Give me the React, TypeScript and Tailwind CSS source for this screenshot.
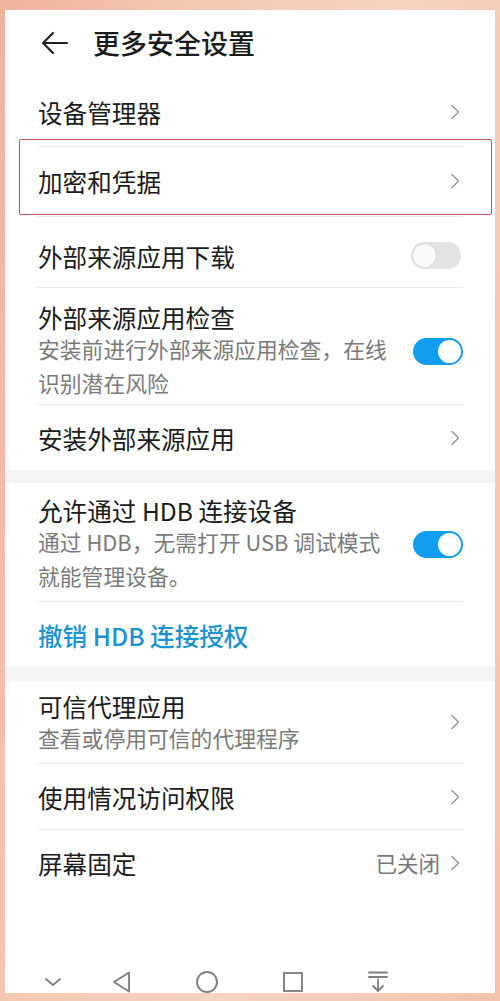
import type { ReactNode } from "react";

const font = { fontFamily: '"Noto Sans CJK SC", "Noto Sans", sans-serif' };

function Chevron() {
  return (
    <svg width="12" height="18" viewBox="0 0 12 18" className="shrink-0">
      <path d="M3 2.5 L9.5 9 L3 15.5" fill="none" stroke="#9b9b9b" strokeWidth="1.6" strokeLinecap="round" strokeLinejoin="round" />
    </svg>
  );
}

function Toggle({ on }: { on: boolean }) {
  return on ? (
    <div className="flex h-[27px] w-[50px] shrink-0 items-center justify-end rounded-full bg-[#139df0] p-[2px]">
      <div className="h-[23px] w-[23px] rounded-full bg-white" />
    </div>
  ) : (
    <div className="flex h-[27px] w-[50px] shrink-0 items-center rounded-full bg-[#e3e3e3] p-[2px]">
      <div className="h-[23px] w-[23px] rounded-full bg-[#fafafa] shadow-[0_0_1px_rgba(0,0,0,0.25)]" />
    </div>
  );
}

function Divider() {
  return <div className="mx-[32px] h-px bg-[#ebebeb]" />;
}

type RowProps = {
  title: string;
  right?: ReactNode;
  className?: string;
};

function Row({ title, right, className = "" }: RowProps) {
  return (
    <div className={`flex items-center justify-between pl-[33px] pr-[34px] ${className}`}>
      <span className="text-[24.6px] leading-[32px] text-[#1b1b1b]">{title}</span>
      {right ?? <Chevron />}
    </div>
  );
}

export default function App() {
  return (
    <div
      className="flex h-[1001px] w-[500px] flex-col bg-[linear-gradient(100deg,#efb39c_0%,#f4c9b3_30%,#f6d3c0_60%,#f2c3ac_100%)] pb-[8px] pl-[5px] pr-[5px] pt-[10px]"
      style={font}
    >
      <div className="flex flex-1 flex-col bg-white">
        <header className="flex h-[66px] items-center pl-[35px]">
          <svg width="30" height="26" viewBox="0 0 30 26" className="shrink-0">
            <path d="M27 13 H4 M13 3 L3 13 L13 23" fill="none" stroke="#222" strokeWidth="2.2" strokeLinecap="round" strokeLinejoin="round" />
          </svg>
          <h1 className="ml-[23px] text-[27px] font-medium leading-[34px] text-[#1b1b1b]">更多安全设置</h1>
        </header>

        <Row title="设备管理器" className="h-[70px] pt-[2px]" />
        <Divider />
        <div className="relative">
          <Row title="加密和凭据" className="h-[69px] pb-[2px]" />
          <div className="pointer-events-none absolute -top-[8px] bottom-px left-[14px] right-[3px] rounded-[2px] border-[length:1.5px] border-solid border-[color:#c4505b]" />
        </div>
        <Divider />
        <Row title="外部来源应用下载" right={<Toggle on={false} />} className="h-[70px] pt-[7px]" />
        <Divider />

        <div className="flex items-center justify-between pb-[4px] pl-[33px] pr-[32px] pt-[14px]">
          <div>
            <div className="text-[24.6px] leading-[30px] text-[#1b1b1b]">外部来源应用检查</div>
            <div className="text-[21.8px] leading-[34px] text-[#7a7a7a]">
              安装前进行外部来源应用检查，在线
              <br />
              识别潜在风险
            </div>
          </div>
          <Toggle on />
        </div>
        <Divider />
        <Row title="安装外部来源应用" className="h-[65px]" />

        <div className="h-[13px] bg-[#f4f4f4]" />

        <div className="flex items-center justify-between pb-[8px] pl-[33px] pr-[32px] pt-[12px]">
          <div>
            <div className="text-[24.6px] leading-[30px] text-[#1b1b1b]">允许通过 HDB 连接设备</div>
            <div className="text-[21.8px] leading-[34px] text-[#7a7a7a]">
              通过 HDB，无需打开 USB 调试模式
              <br />
              就能管理设备。
            </div>
          </div>
          <Toggle on />
        </div>
        <Divider />
        <div className="flex h-[65px] items-center pl-[33px]">
          <span className="text-[24.6px] font-medium leading-[32px] text-[#1d92d2]">撤销 HDB 连接授权</span>
        </div>

        <div className="h-[14px] bg-[#f4f4f4]" />

        <div className="flex items-center justify-between pb-[9px] pl-[33px] pr-[34px] pt-[9px]">
          <div>
            <div className="text-[24.6px] leading-[32px] text-[#1b1b1b]">可信代理应用</div>
            <div className="text-[21.8px] leading-[32px] text-[#7a7a7a]">查看或停用可信的代理程序</div>
          </div>
          <Chevron />
        </div>
        <Divider />
        <Row title="使用情况访问权限" className="h-[65px]" />
        <Divider />
        <Row
          title="屏幕固定"
          className="h-[65px]"
          right={
            <div className="flex items-center gap-[9px]">
              <span className="text-[21.5px] leading-[30px] text-[#777]">已关闭</span>
              <Chevron />
            </div>
          }
        />

        <div className="flex-1" />

        <nav className="mb-[-1px] flex h-[24px] items-center pl-[33px]">
          <svg width="30" height="20" viewBox="0 0 30 20" className="shrink-0">
            <path d="M8 7 L15 13 L22 7" fill="none" stroke="#808080" strokeWidth="1.8" strokeLinecap="round" strokeLinejoin="round" />
          </svg>
          <svg width="24" height="24" viewBox="0 0 24 24" className="ml-[42px] shrink-0">
            <path d="M19 2.5 L19 21.5 L4 12 Z" fill="none" stroke="#808080" strokeWidth="1.9" strokeLinejoin="round" />
          </svg>
          <svg width="24" height="24" viewBox="0 0 24 24" className="ml-[61px] shrink-0">
            <circle cx="12" cy="12" r="10" fill="none" stroke="#808080" strokeWidth="1.9" />
          </svg>
          <svg width="24" height="24" viewBox="0 0 24 24" className="ml-[62px] shrink-0">
            <rect x="3" y="3" width="18" height="18" fill="none" stroke="#808080" strokeWidth="1.9" />
          </svg>
          <svg width="24" height="24" viewBox="0 0 24 24" className="ml-[61px] shrink-0">
            <path d="M3 2.5 H21 M3 7 H21 M12 9.5 V21 M7 16 L12 21 L17 16" fill="none" stroke="#808080" strokeWidth="1.8" strokeLinecap="round" strokeLinejoin="round" />
          </svg>
        </nav>
      </div>
    </div>
  );
}
